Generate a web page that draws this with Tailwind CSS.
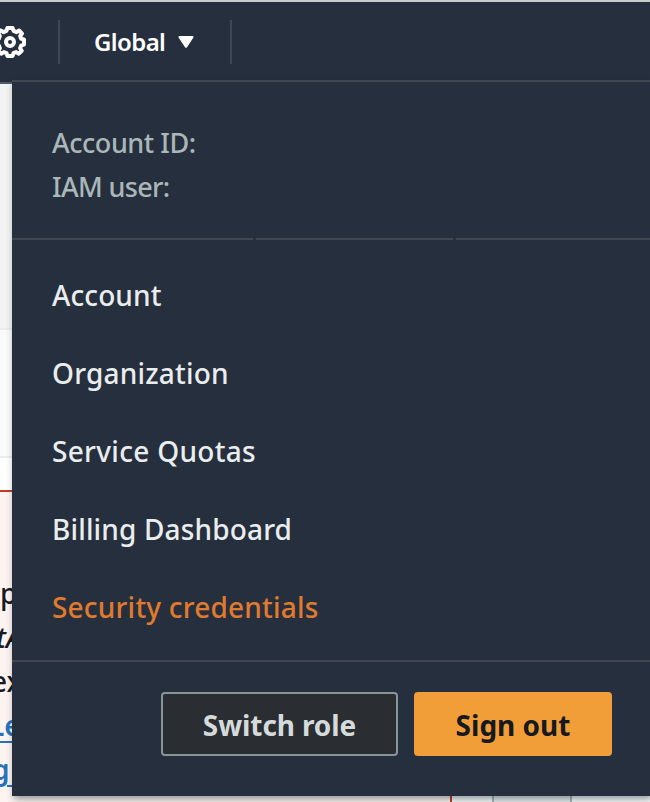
<!DOCTYPE html>
<html lang="en">
<head>
  <meta charset="UTF-8" />
  <meta name="viewport" content="width=device-width, initial-scale=1.0" />
  <title>Account menu</title>
  <script src="https://cdn.jsdelivr.net/npm/@tailwindcss/browser@4"></script>
</head>
<body class="bg-white font-['Noto_Sans','Open_Sans',sans-serif]">
  <div class="relative flex h-[802px] w-[650px] flex-col overflow-hidden">
    <!-- top bar -->
    <header class="flex h-[84px] shrink-0 items-start border-t-2 border-b-2 border-t-[#c9cbcd] border-b-[#545b64] bg-[#262f3e]">
      <div class="mt-[18px] flex h-11 w-[60px] items-center border-r-2 border-[#414750]">
        <svg class="-ml-[7px] h-[34px] w-[34px] shrink-0" viewBox="-17 -17 34 34" fill="none" stroke="#fff">
          <path stroke-width="4" stroke-linejoin="round" d="M-2.6-14H2.6L3.6-11.1 6.6-9.8 9.2-11.5 12-8.4 10.2-6 11.2-3.2 14-2.6V2.6L11.2 3.4 10.1 6.2 11.7 8.8 8.8 11.7 6.2 10.1 3.4 11.2 2.6 14H-2.6L-3.4 11.2-6.2 10.1-8.8 11.7-11.7 8.8-10.1 6.2-11.2 3.4-14 2.6V-2.6L-11.2-3.2-10.2-6-12-8.4-9.2-11.5-6.6-9.8-3.6-11.1Z" />
          <circle r="4" stroke-width="4" />
        </svg>
      </div>
      <div class="mt-[18px] flex h-11 w-[172px] items-center border-r-2 border-[#414750] pl-[34px] text-white">
        <span class="w-[84px] text-[24px] leading-8 font-semibold tracking-[-0.6px]">Global</span>
        <svg class="h-3 w-4" viewBox="0 0 16 12" fill="#fff"><path d="M1.5 0h13q1.6.4.8 1.8L9 11.2q-1 1.2-2 0L.7 1.8Q-.1.4 1.5 0Z" /></svg>
      </div>
    </header>

    <!-- page behind the menu -->
    <main class="flex flex-1 flex-col bg-[#fafafa]">
      <div class="h-[246px] shrink-0 border-b-2 border-[#eaeded] bg-[#f2f4f4]"></div>
      <div class="h-32 shrink-0 border-b-2 border-[#eaeded]"></div>
      <div class="h-8 shrink-0 bg-white"></div>
      <div class="flex flex-1">
        <div class="w-[452px] overflow-hidden border-t-2 border-r-2 border-[#c23d22] bg-[#fdf3f1] pt-[79px] text-[28px] leading-[44px] font-medium whitespace-nowrap text-[#16191f]">
          <p>p</p>
          <p class="-ml-[4px] italic">tA</p>
          <p class="-ml-[9px]">ex</p>
          <p class="-ml-[11px] font-semibold text-[#2672bd] underline decoration-2 underline-offset-5">Le</p>
          <p class="-ml-[8px] font-semibold text-[#2672bd] underline decoration-2 underline-offset-5">g in</p>
        </div>
        <div class="w-10"></div>
        <div class="w-20 border-x-2 border-[#aab7b8] bg-[#eaeded]"></div>
      </div>
    </main>

    <!-- account menu -->
    <div class="absolute top-[80px] right-0 left-[12px] flex h-[716px] flex-col border-t-2 border-[#414750] bg-[#262f3e] shadow-[2px_3px_7px_rgba(0,28,36,0.45)]">
      <div class="flex h-[156px] flex-col pt-[39px] pl-10 text-[27px] leading-[44px] font-medium text-[#aab7b8]">
        <span class="tracking-[-0.45px]">Account ID:</span>
        <span class="tracking-[-0.65px]">IAM user:</span>
      </div>
      <div class="flex h-0.5 gap-[3px]">
        <div class="w-[241px] bg-[#414750]"></div>
        <div class="w-[197px] bg-[#414750]"></div>
        <div class="flex-1 bg-[#414750]"></div>
      </div>
      <nav class="flex h-[420px] flex-col pt-[16px] pl-10 text-[28px] leading-[78px] font-medium text-[#eaeded]">
        <a class="tracking-[0.1px]">Account</a>
        <a class="tracking-[0.2px]">Organization</a>
        <a class="tracking-[0.3px]">Service Quotas</a>
        <a class="tracking-[0.15px]">Billing Dashboard</a>
        <a class="tracking-[0.2px] text-[#e07b2e]">Security credentials</a>
      </nav>
      <div class="flex flex-1 justify-end gap-4 border-t-2 border-[#414750] pt-[30px] pr-[38px] text-[28px] leading-none font-bold">
        <button class="h-16 w-[237px] rounded-[4px] border-2 border-[#879596] bg-[#2a2d32] pt-0.5 tracking-[-0.1px] text-[#d5dbdb]">Switch role</button>
        <button class="h-16 w-[198px] rounded-[4px] bg-[#f19e38] pt-0.5 text-[#16191f]">Sign out</button>
      </div>
    </div>
  </div>
</body>
</html>
